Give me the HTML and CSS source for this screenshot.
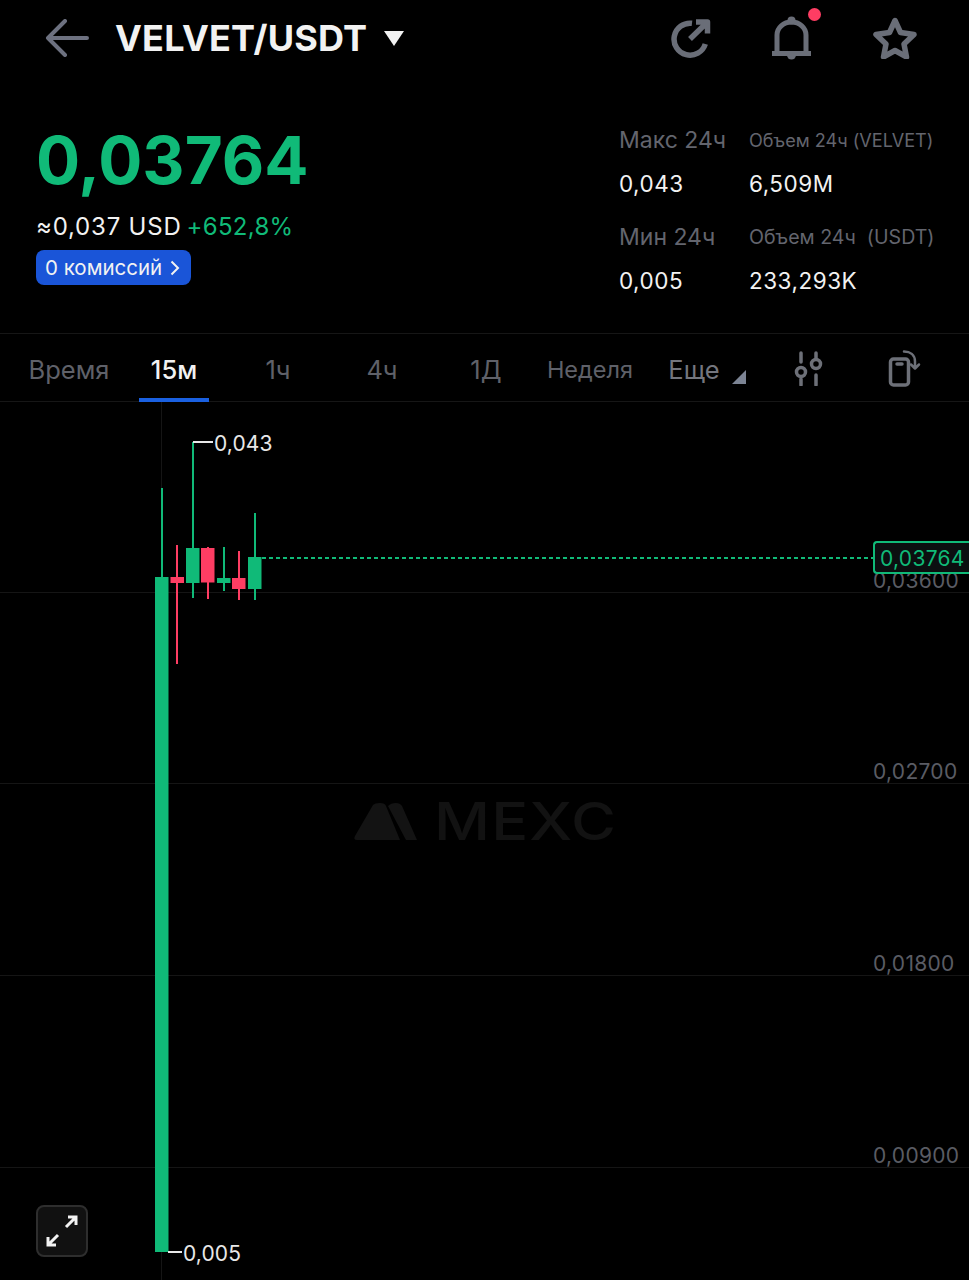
FILE: index.html
```html
<!doctype html>
<html>
<head>
    <title>VELVET/USDT</title>
    <link rel="stylesheet" href="styles.css">
</head>
<body>
<header class="topbar">
    <svg class="back" width="44" height="38" viewBox="0 0 44 38"><path d="M42 19H3M20 2L3 19l17 17"/></svg>
    <div class="pair">VELVET/USDT</div>
    <div class="caret"></div>
    <div class="actions">
        <svg class="ico" width="40" height="42" viewBox="0 0 40 42"><path d="M21 6.300A16 16 0 1 0 34.300 27M19 22L36 5.500M25 5h11.500v11.500"/></svg>
        <div class="bell">
            <svg width="40" height="44" viewBox="0 0 40 44">
                <path class="bell-line" d="M0 37.500H39M5 37V19a14.500 13 0 0 1 29 0v18"/>
                <circle class="bell-fill" cx="19.500" cy="4.500" r="4"/>
                <path class="bell-fill" d="M15 39h9a4.500 4.500 0 0 1-9 0z"/>
            </svg>
            <span class="dot"></span>
        </div>
        <svg class="ico" width="44" height="42" viewBox="0 0 44 42"><path d="M22 3.500l5.500 12 13.500 2-10 9.500 2.500 13L22 33.500l-11.500 6.500 2.500-13-10-9.500 13.500-2z"/></svg>
    </div>
</header>

<section class="summary">
    <div class="price-box">
        <div class="price">0,03764</div>
        <div class="sub"><span class="usd">≈0,037 USD</span><span class="chg">+652,8%</span></div>
        <div class="pill">0 комиссий <svg width="10" height="16" viewBox="0 0 10 16"><path d="M1.500 1.500L8 8l-6.500 6.500"/></svg></div>
    </div>
    <div class="stats">
        <div class="lbl">Макс 24ч</div><div class="lbl vol-a">Объем 24ч (VELVET)</div>
        <div class="val">0,043</div><div class="val">6,509M</div>
        <div class="lbl">Мин 24ч</div><div class="lbl vol-b">Объем 24ч&nbsp; (USDT)</div>
        <div class="val">0,005</div><div class="val">233,293K</div>
    </div>
</section>

<nav class="tabs">
    <div class="tab first">Время</div>
    <div class="tab active">15м</div>
    <div class="tab">1ч</div>
    <div class="tab">4ч</div>
    <div class="tab">1Д</div>
    <div class="tab week">Неделя</div>
    <div class="tab more">Еще<span class="corner"></span></div>
    <svg class="tab-ico sliders" width="30" height="36" viewBox="0 0 30 36"><path d="M7 3v9M7 29v6M22 3v5M22 25v10"/><circle cx="7" cy="22" r="4.500"/><circle cx="22" cy="14" r="4.500"/></svg>
    <svg class="tab-ico rotate" width="34" height="38" viewBox="0 0 34 38"><rect x="3.500" y="10" width="18" height="26" rx="3"/><path d="M10 15h5"/><path class="thin" d="M17 2.500c6 0 11 3 11 10v6M24 15.500l4 4 4-4"/></svg>
</nav>

<main class="chart">
    <svg class="plot" width="969" height="878" viewBox="0 402 969 878">
        <g class="grid">
            <rect x="0" y="592" width="969" height="1"/>
            <rect x="0" y="783" width="969" height="1"/>
            <rect x="0" y="975" width="969" height="1"/>
            <rect x="0" y="1167" width="969" height="1"/>
            <rect x="161" y="402" width="1" height="878"/>
        </g>
        <path class="logo" d="M357 840q-4 0-2-4l18-31q2-2 7-2t6 3l14 34zM388 806q3-3 8-3 4 0 6 3l15 34h-11z"/>
        <line class="dash" x1="262" y1="558" x2="873" y2="558"/>
        <g class="up">
            <rect x="161" y="488" width="2" height="90"/><rect x="155" y="577" width="13.500" height="675"/>
            <rect x="192" y="442" width="2" height="156"/><rect x="186" y="548" width="13.500" height="35"/>
            <rect x="223" y="547" width="2" height="44"/><rect x="217" y="578" width="13.500" height="5"/>
            <rect x="254" y="513" width="2" height="87"/><rect x="248" y="557" width="13.500" height="32"/>
        </g>
        <g class="down">
            <rect x="176" y="545" width="2" height="119"/><rect x="170.500" y="577" width="13.500" height="6"/>
            <rect x="207" y="547" width="2" height="52"/><rect x="201" y="548" width="13.500" height="34.500"/>
            <rect x="238" y="551" width="2" height="49"/><rect x="232" y="578" width="13.500" height="11"/>
        </g>
        <path class="leader" d="M193 442h20M168 1252h14"/>
    </svg>

    <div class="mark">MEXC</div>

    <div class="axis a1">0,03600</div>
    <div class="axis a2">0,02700</div>
    <div class="axis a3">0,01800</div>
    <div class="axis a4">0,00900</div>
    <div class="last">0,03764</div>
    <div class="extreme hi">0,043</div>
    <div class="extreme lo">0,005</div>

    <div class="expand">
        <svg width="32" height="32" viewBox="0 0 32 32"><path d="M20 12L30 2M22 2h8v8M12 20L2 30M2 22v8h8"/></svg>
    </div>
</main>
</body>
</html>
```
FILE: styles.css
```css
* {
    box-sizing: border-box;
}
body {
    margin: 0;
    background: #000;
    color: #f2f2f2;
    font-family: Inter, "Liberation Sans", sans-serif;
    width: 969px;
    height: 1280px;
    overflow: hidden;
}
svg {
    display: block;
}
path {
    fill: none;
}

/* top bar */
.topbar {
    display: flex;
    align-items: center;
    height: 76px;
    padding-left: 45px;
}
.back path {
    stroke: #6d7180;
    stroke-width: 4;
    stroke-linecap: round;
    stroke-linejoin: round;
}
.pair {
    margin-left: 26px;
    font-size: 36px;
    font-weight: 700;
    letter-spacing: 0.2px;
}
.caret {
    margin-left: 17px;
    width: 0;
    height: 0;
    border-left: 10.500px solid transparent;
    border-right: 10.500px solid transparent;
    border-top: 15px solid #f2f2f2;
}
.actions {
    margin-left: auto;
    margin-right: 52px;
    display: flex;
    align-items: center;
    gap: 61px;
}
.ico path {
    stroke: #6a6e78;
    stroke-width: 5.500;
    stroke-linejoin: round;
}
.bell {
    position: relative;
}
.bell-line {
    stroke: #6a6e78;
    stroke-width: 5;
}
.bell-fill {
    fill: #6a6e78;
}
.dot {
    position: absolute;
    top: -8px;
    left: 36px;
    width: 13px;
    height: 13px;
    border-radius: 50%;
    background: #fe3d63;
}

/* price and stats */
.summary {
    display: flex;
    justify-content: space-between;
    height: 258px;
    border-bottom: 1px solid #161616;
}
.price-box {
    padding: 45px 0 0 36px;
}
.price {
    font-size: 65.500px;
    font-weight: 700;
    line-height: 80px;
    color: #10ba78;
}
.sub {
    margin-top: 11px;
    font-size: 24px;
    line-height: 30px;
}
.usd {
    letter-spacing: 0.8px;
}
.chg {
    margin-left: 5px;
    letter-spacing: 0.3px;
    color: #10ba78;
}
.pill {
    margin-top: 8px;
    display: inline-flex;
    align-items: center;
    gap: 8px;
    height: 35px;
    padding: 0 11px 0 9px;
    border-radius: 8px;
    background: #1a55d8;
    font-size: 20.500px;
}
.pill path {
    stroke: #f2f2f2;
    stroke-width: 2;
}
.stats {
    display: grid;
    grid-template-columns: 130px 220px;
    grid-template-rows: 45px 43px 63px 25px;
    align-items: center;
    margin-top: 41px;
    width: 350px;
}
.lbl {
    color: #63656e;
    font-size: 23px;
}
.lbl.vol-a {
    font-size: 18.100px;
}
.lbl.vol-b {
    font-size: 19.600px;
}
.val {
    font-size: 22.500px;
    letter-spacing: 0.5px;
}

/* interval tabs */
.tabs {
    display: flex;
    align-items: center;
    height: 68px;
    padding-left: 18px;
    border-bottom: 1px solid #161616;
}
.tab {
    position: relative;
    width: 104px;
    height: 67px;
    line-height: 72px;
    text-align: center;
    font-size: 25.500px;
    color: #5f6169;
}
.tab.first {
    text-indent: -2px;
}
.tab.week {
    font-size: 23.500px;
}
.tab.active {
    color: #f2f2f2;
    font-weight: 500;
}
.tab.active::after {
    content: "";
    position: absolute;
    left: 17px;
    bottom: -1px;
    width: 70px;
    height: 4px;
    background: #1a60e0;
}
.more {
    color: #74767e;
}
.corner {
    position: absolute;
    left: 90px;
    top: 36px;
    width: 0;
    height: 0;
    border-left: 14px solid transparent;
    border-bottom: 14px solid #7c8494;
}
.tab-ico path,
.tab-ico circle,
.tab-ico rect {
    fill: none;
    stroke: #6d7078;
    stroke-width: 3.500;
    stroke-linecap: round;
    stroke-linejoin: round;
}
.tab-ico .thin {
    stroke-width: 2.500;
}
.sliders {
    margin-left: 48px;
}
.rotate {
    margin-left: 63px;
}

/* chart canvas */
.chart {
    position: relative;
    height: 878px;
}
.plot {
    position: absolute;
    left: 0;
    top: 0;
}
.grid rect {
    fill: #151515;
}
.up rect {
    fill: #10ba78;
}
.down rect {
    fill: #fe3d63;
}
.logo {
    fill: #131313;
}
.dash {
    stroke: #10ba78;
    stroke-width: 2;
    stroke-dasharray: 4 3;
}
.leader {
    stroke: #e8e8e8;
    stroke-width: 2;
}
.mark {
    position: absolute;
    left: 434px;
    top: 390px;
    font-size: 52px;
    line-height: 60px;
    font-weight: 500;
    letter-spacing: 1px;
    color: #121212;
    transform: scaleX(1.18);
    transform-origin: left center;
}
.axis {
    position: absolute;
    left: 873px;
    font-size: 21px;
    line-height: 24px;
    letter-spacing: 0.3px;
    color: #5a5c64;
}
.a1 { top: 167px; }
.a2 { top: 358px; }
.a3 { top: 550px; }
.a4 { top: 742px; }
.last {
    position: absolute;
    left: 873px;
    top: 139px;
    width: 96px;
    height: 33px;
    padding-left: 5px;
    border: 2px solid #10ba78;
    border-right: none;
    border-radius: 4px 0 0 4px;
    background: #0b0f10;
    color: #10ba78;
    font-size: 21px;
    line-height: 31px;
    letter-spacing: 0.3px;
}
.extreme {
    position: absolute;
    font-size: 21px;
    line-height: 24px;
    letter-spacing: 0.1px;
    color: #e8e8e8;
}
.hi {
    left: 214px;
    top: 30px;
}
.lo {
    left: 183px;
    top: 840px;
}
.expand {
    position: absolute;
    left: 36px;
    top: 803px;
    width: 52px;
    height: 52px;
    display: flex;
    align-items: center;
    justify-content: center;
    border: 2px solid #2e2e2e;
    border-radius: 8px;
    background: #111;
}
.expand path {
    stroke: #f2f2f2;
    stroke-width: 3;
}
```
